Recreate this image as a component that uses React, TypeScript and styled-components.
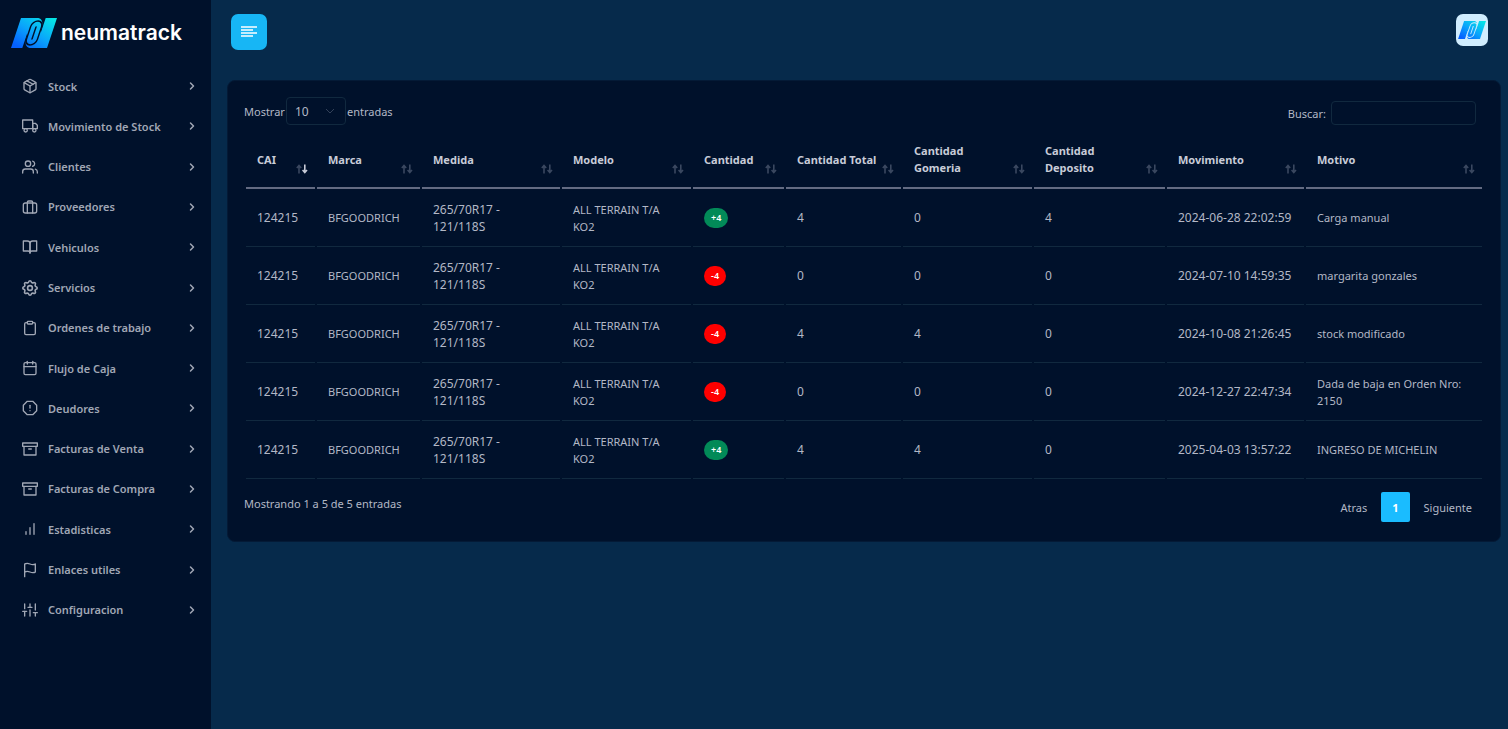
import React from "react";
import styled, { createGlobalStyle } from "styled-components";
import {
  FiPackage,
  FiTruck,
  FiUsers,
  FiBookOpen,
  FiClipboard,
  FiCalendar,
  FiAlertOctagon,
  FiArchive,
  FiBarChart,
  FiFlag,
  FiSliders,
  FiChevronRight,
} from "react-icons/fi";
import { TbSettings } from "react-icons/tb";

const color = {
  deep: "#00112b",
  page: "#062a4b",
  line: "#11293f",
  text: "#b3b8c6",
  heading: "#c8ccd8",
  menu: "#a0a7b5",
  accent: "#17b6f5",
};

const GlobalStyle = createGlobalStyle`
  *, *::before, *::after { box-sizing: border-box; }
  body {
    margin: 0;
    background: ${color.page};
    color: ${color.text};
    font: 400 11px/17px "Noto Sans", "Open Sans", sans-serif;
  }
  button, input, select { font: inherit; color: inherit; }
`;

const Shell = styled.div`
  display: flex;
  min-height: 100vh;
`;

const Sidebar = styled.aside`
  flex: 0 0 211px;
  background: ${color.deep};
`;

const Brand = styled.a`
  display: flex;
  align-items: center;
  gap: 4px;
  height: 66px;
  padding: 0 11px;
  color: #fff;
  text-decoration: none;
  font: 600 21px/28px Inter, sans-serif;
`;

const Menu = styled.ul`
  display: grid;
  grid-auto-rows: 1fr;
  min-height: 564px;
  margin: 0;
  padding: 0;
  list-style: none;
`;

const MenuLink = styled.a`
  display: flex;
  align-items: center;
  gap: 10px;
  height: 100%;
  padding: 0 13px 0 22px;
  color: ${color.menu};
  font-weight: 600;
  text-decoration: none;

  > svg {
    flex: none;
    width: 16px;
    height: 16px;
    stroke-width: 2;
  }
  > svg:last-child {
    width: 12px;
    height: 12px;
    margin-left: auto;
    stroke-width: 3;
  }
`;

const Main = styled.main`
  flex: 1;
  min-width: 0;
  padding: 0 7px 0 16px;
`;

const TopBar = styled.header`
  display: flex;
  justify-content: space-between;
  align-items: flex-start;
  height: 80px;
  padding: 14px 13px 0 4px;
`;

const ToggleButton = styled.button`
  display: grid;
  place-items: center;
  width: 36px;
  height: 36px;
  padding: 0;
  border: 0;
  border-radius: 7px;
  background: ${color.accent};
`;

const Avatar = styled.button`
  display: grid;
  place-items: center;
  width: 32px;
  height: 32px;
  padding: 0;
  border: 0;
  border-radius: 7px;
  background: #d0edfe;
`;

const Card = styled.section`
  padding: 16px 16px 19px;
  border: 1px solid #041a36;
  border-radius: 8px;
  background: ${color.deep};
`;

const Controls = styled.div`
  display: flex;
  justify-content: space-between;
  align-items: flex-start;
  margin-bottom: 6px;
`;

const LengthLabel = styled.label`
  display: flex;
  align-items: center;
  gap: 1px;
`;

const SelectBox = styled.span`
  position: relative;
  display: flex;

  svg {
    position: absolute;
    top: 10px;
    right: 11px;
    pointer-events: none;
  }
`;

const Select = styled.select`
  width: 60px;
  height: 28px;
  padding: 0 8px;
  border: 1px solid ${color.line};
  border-radius: 4px;
  background: ${color.deep};
  font-size: 12px;
  appearance: none;
`;

const SearchLabel = styled.label`
  display: flex;
  align-items: center;
  gap: 5px;
  padding: 4px 8px 0 0;
`;

const SearchInput = styled.input`
  width: 145px;
  height: 24px;
  padding: 0 6px;
  border: 1px solid ${color.line};
  border-radius: 4px;
  background: transparent;
`;

const Table = styled.table`
  width: 100%;
  table-layout: fixed;
  border-collapse: separate;
  border-spacing: 2px 0;
`;

const Col = styled.col<{ $width: number }>`
  width: ${(p) => p.$width}px;
`;

const Th = styled.th`
  padding: 11px 7px 11px 11px;
  border-bottom: 2px solid #636b82;
  text-align: left;
`;

const SortButton = styled.button`
  display: flex;
  justify-content: space-between;
  align-items: center;
  width: 100%;
  min-height: 34px;
  padding: 0;
  border: 0;
  background: none;
  color: ${color.heading};
  font-weight: 700;
  text-align: left;
  white-space: pre;

  svg {
    flex: none;
    align-self: flex-end;
    margin-bottom: 2px;
  }
`;

const Td = styled.td<{ $numeric?: boolean }>`
  height: 58px;
  padding: 0 11px;
  border-bottom: 1px solid ${color.line};
  font-size: ${(p) => (p.$numeric ? 12 : 11)}px;
`;

const Badge = styled.span<{ $positive: boolean }>`
  display: inline-block;
  padding: 1px 7px;
  border-radius: 10px;
  background: ${(p) => (p.$positive ? "#028a58" : "#ff0000")};
  color: #fff;
  font-size: 9px;
  font-weight: 600;
  line-height: 18px;
`;

const Footer = styled.div`
  display: flex;
  justify-content: space-between;
  align-items: flex-start;
  padding-top: 13px;
`;

const Info = styled.p`
  margin: 3px 0 0;
`;

const Pager = styled.nav`
  display: flex;
  gap: 2px;
`;

const PageButton = styled.button<{ $current?: boolean }>`
  height: 30px;
  padding: 0 ${(p) => (p.$current ? 11 : 12)}px;
  border: 0;
  border-radius: 2px;
  background: ${(p) => (p.$current ? "#1abcff" : "none")};
  color: ${(p) => (p.$current ? "#fff" : "inherit")};
  font-weight: ${(p) => (p.$current ? 700 : 400)};
`;

function LogoMark({ width, gap, id }: { width: number; gap: string; id: string }) {
  return (
    <svg width={width} viewBox="0 0 46 30" aria-hidden="true">
      <defs>
        <linearGradient id={id} x1="0" y1="1" x2="1" y2="0">
          <stop offset="0.1" stopColor="#0560ff" />
          <stop offset="0.5" stopColor="#0aa5fb" />
          <stop offset="0.95" stopColor="#05e6e6" />
        </linearGradient>
      </defs>
      <path d="M0 30 10 0H46L36 30Z" fill={`url(#${id})`} />
      <path
        d="M27.5 0C31 1 32 4 31 8L29.5 13 30 14 34.7 0ZM18.5 30C15 29 14 26 15 22L16.5 17 16 16 11.3 30Z"
        fill={gap}
      />
      <g fill="none" stroke={gap} transform="translate(5 0) skewX(-18.4)" strokeLinecap="round">
        <rect x="17.5" y="3" width="11" height="24" rx="5.5" strokeWidth="1.5" />
        <path d="M23 9V21" strokeWidth="1.5" />
      </g>
    </svg>
  );
}

function SuitcaseIcon() {
  return (
    <svg viewBox="0 0 24 24" fill="none" stroke="currentColor" strokeLinecap="round" strokeLinejoin="round">
      <rect x="2" y="6" width="20" height="15" rx="3" />
      <path d="M8 21V5a2 2 0 0 1 2-2h4a2 2 0 0 1 2 2v16" />
    </svg>
  );
}

function GearIcon() {
  return <TbSettings viewBox="2 2 20 20" />;
}

function SortIcon({ active }: { active?: boolean }) {
  return (
    <svg width="12" height="10" viewBox="0 0 12 10" fill="none" strokeWidth="1.6">
      <path d="M3 9.5V1.5M.8 4 3 1.5 5.2 4" stroke="#3a4860" />
      <path d="M8.8 .5V8.5M6.6 6 8.8 8.5 11 6" stroke={active ? "#c8ccd8" : "#3a4860"} />
    </svg>
  );
}

const menu: [string, React.ElementType][] = [
  ["Stock", FiPackage],
  ["Movimiento de Stock", FiTruck],
  ["Clientes", FiUsers],
  ["Proveedores", SuitcaseIcon],
  ["Vehiculos", FiBookOpen],
  ["Servicios", GearIcon],
  ["Ordenes de trabajo", FiClipboard],
  ["Flujo de Caja", FiCalendar],
  ["Deudores", FiAlertOctagon],
  ["Facturas de Venta", FiArchive],
  ["Facturas de Compra", FiArchive],
  ["Estadisticas", FiBarChart],
  ["Enlaces utiles", FiFlag],
  ["Configuracion", FiSliders],
];

const columns: [string, number][] = [
  ["CAI", 69],
  ["Marca", 103],
  ["Medida", 138],
  ["Modelo", 129],
  ["Cantidad", 91],
  ["Cantidad Total", 115],
  ["Cantidad\nGomeria", 129],
  ["Cantidad\nDeposito", 131],
  ["Movimiento", 137],
  ["Motivo", 176],
];

const rows = [
  { change: "+4", total: 4, gomeria: 0, deposito: 4, date: "2024-06-28 22:02:59", reason: "Carga manual" },
  { change: "-4", total: 0, gomeria: 0, deposito: 0, date: "2024-07-10 14:59:35", reason: "margarita gonzales" },
  { change: "-4", total: 4, gomeria: 4, deposito: 0, date: "2024-10-08 21:26:45", reason: "stock modificado" },
  { change: "-4", total: 0, gomeria: 0, deposito: 0, date: "2024-12-27 22:47:34", reason: "Dada de baja en Orden Nro: 2150" },
  { change: "+4", total: 4, gomeria: 4, deposito: 0, date: "2025-04-03 13:57:22", reason: "INGRESO DE MICHELIN" },
];

export default function App() {
  return (
    <>
      <GlobalStyle />
      <Shell>
        <Sidebar>
          <Brand href="#">
            <LogoMark width={46} gap={color.deep} id="brand" />
            neumatrack
          </Brand>
          <nav>
            <Menu>
              {menu.map(([label, Icon]) => (
                <li key={label}>
                  <MenuLink href="#">
                    <Icon />
                    {label}
                    <FiChevronRight />
                  </MenuLink>
                </li>
              ))}
            </Menu>
          </nav>
        </Sidebar>
        <Main>
          <TopBar>
            <ToggleButton aria-label="Menu">
              <svg width="18" height="14" viewBox="0 0 18 14" stroke="#fff" strokeWidth="1.7">
                <path d="M1 2H17M1 5H13M1 8H17M1 11H13" />
              </svg>
            </ToggleButton>
            <Avatar aria-label="Cuenta">
              <LogoMark width={28} gap="#d0edfe" id="avatar" />
            </Avatar>
          </TopBar>
          <Card>
            <Controls>
              <LengthLabel>
                Mostrar
                <SelectBox>
                  <Select defaultValue="10">
                    <option>10</option>
                    <option>25</option>
                    <option>50</option>
                    <option>100</option>
                  </Select>
                  <svg width="10" height="8" viewBox="0 0 10 8" fill="none" stroke="#34425a">
                    <path d="M1 2 5 6 9 2" />
                  </svg>
                </SelectBox>
                entradas
              </LengthLabel>
              <SearchLabel>
                Buscar:
                <SearchInput type="search" />
              </SearchLabel>
            </Controls>
            <Table>
              <colgroup>
                {columns.map(([label, width]) => (
                  <Col key={label} $width={width} />
                ))}
              </colgroup>
              <thead>
                <tr>
                  {columns.map(([label], i) => (
                    <Th key={label} scope="col">
                      <SortButton>
                        {label}
                        <SortIcon active={i === 0} />
                      </SortButton>
                    </Th>
                  ))}
                </tr>
              </thead>
              <tbody>
                {rows.map((r) => (
                  <tr key={r.date}>
                    <Td $numeric>124215</Td>
                    <Td>BFGOODRICH</Td>
                    <Td $numeric>265/70R17 - 121/118S</Td>
                    <Td>ALL TERRAIN T/A KO2</Td>
                    <Td>
                      <Badge $positive={r.change.startsWith("+")}>{r.change}</Badge>
                    </Td>
                    <Td $numeric>{r.total}</Td>
                    <Td $numeric>{r.gomeria}</Td>
                    <Td $numeric>{r.deposito}</Td>
                    <Td $numeric>{r.date}</Td>
                    <Td>{r.reason}</Td>
                  </tr>
                ))}
              </tbody>
            </Table>
            <Footer>
              <Info>Mostrando 1 a 5 de 5 entradas</Info>
              <Pager aria-label="Paginas">
                <PageButton>Atras</PageButton>
                <PageButton $current>1</PageButton>
                <PageButton>Siguiente</PageButton>
              </Pager>
            </Footer>
          </Card>
        </Main>
      </Shell>
    </>
  );
}
